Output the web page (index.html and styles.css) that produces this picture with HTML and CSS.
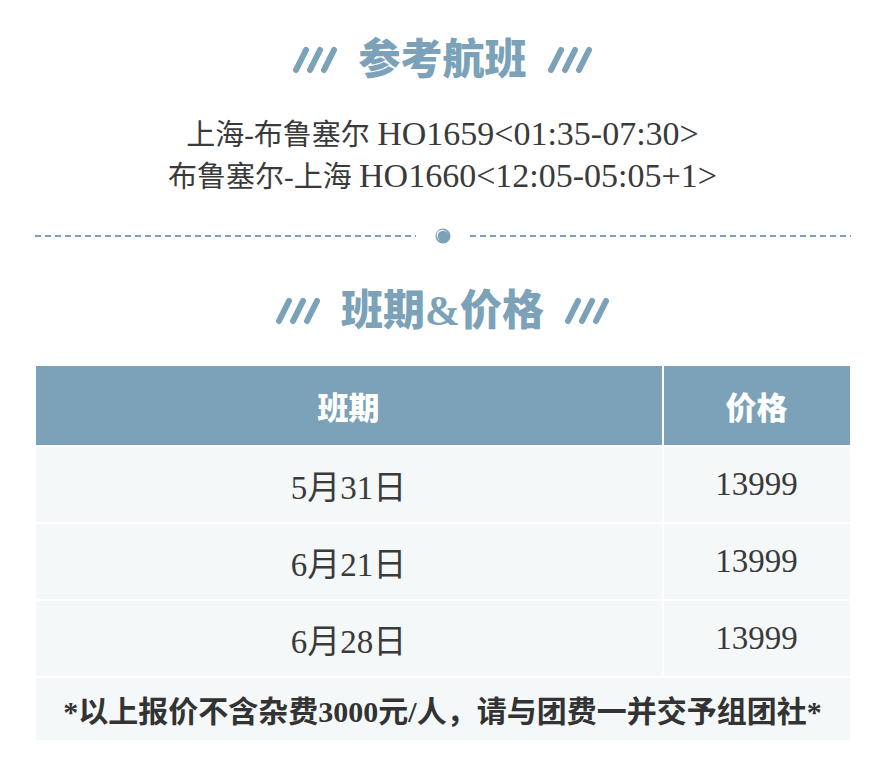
FILE: index.html
```html
<!DOCTYPE html>
<html lang="zh-CN">
<head>
<meta charset="utf-8">
<title>参考航班</title>
<link rel="stylesheet" href="styles.css">
</head>
<body>
<div class="page">
  <div class="title title-first">
    <svg class="slashes" width="46" height="28" viewBox="0 0 46 28"><g stroke="#7ba2b8" stroke-width="6" stroke-linecap="round"><line x1="14" y1="4" x2="4" y2="24"/><line x1="28" y1="4" x2="18" y2="24"/><line x1="42" y1="4" x2="32" y2="24"/></g></svg>
    <span class="title-text">参考航班</span>
    <svg class="slashes" width="46" height="28" viewBox="0 0 46 28"><g stroke="#7ba2b8" stroke-width="6" stroke-linecap="round"><line x1="14" y1="4" x2="4" y2="24"/><line x1="28" y1="4" x2="18" y2="24"/><line x1="42" y1="4" x2="32" y2="24"/></g></svg>
  </div>
  <div class="routes">
    <div class="route">上海-布鲁塞尔 <span class="latin">HO1659&lt;01:35-07:30&gt;</span></div>
    <div class="route">布鲁塞尔-上海 <span class="latin">HO1660&lt;12:05-05:05+1&gt;</span></div>
  </div>
  <div class="divider">
    <span class="dash"></span>
    <svg class="dot" width="16" height="16" viewBox="0 0 16 16"><circle cx="8" cy="8" r="7.5" fill="#7ba2b8"/><circle cx="7.3" cy="7.3" r="5.6" fill="#ffffff"/><circle cx="8.2" cy="8.2" r="5.5" fill="#7ba2b8"/></svg>
    <span class="dash"></span>
  </div>
  <div class="title title-second">
    <svg class="slashes" width="46" height="28" viewBox="0 0 46 28"><g stroke="#7ba2b8" stroke-width="6" stroke-linecap="round"><line x1="14" y1="4" x2="4" y2="24"/><line x1="28" y1="4" x2="18" y2="24"/><line x1="42" y1="4" x2="32" y2="24"/></g></svg>
    <span class="title-text">班期&amp;价格</span>
    <svg class="slashes" width="46" height="28" viewBox="0 0 46 28"><g stroke="#7ba2b8" stroke-width="6" stroke-linecap="round"><line x1="14" y1="4" x2="4" y2="24"/><line x1="28" y1="4" x2="18" y2="24"/><line x1="42" y1="4" x2="32" y2="24"/></g></svg>
  </div>
  <div class="table">
    <div class="cell head">班期</div>
    <div class="cell head">价格</div>
    <div class="cell">5月31日</div>
    <div class="cell">13999</div>
    <div class="cell">6月21日</div>
    <div class="cell">13999</div>
    <div class="cell">6月28日</div>
    <div class="cell">13999</div>
    <div class="cell note">*以上报价不含杂费3000元/人，请与团费一并交予组团社*</div>
  </div>
</div>
</body>
</html>
```

FILE: styles.css
```css
* { box-sizing: border-box; }
html, body { margin: 0; padding: 0; background: #ffffff; }
body {
  font-family: "Liberation Serif", "Noto Sans CJK SC", serif;
  color: #333333;
}
.page {
  width: 885px;
  display: flex;
  flex-direction: column;
  align-items: center;
}
.title {
  display: flex;
  align-items: center;
  justify-content: center;
  gap: 20px;
  height: 46px;
}
.title-first { margin-top: 37px; }
.title-second { margin-top: 44px; }
.title-text {
  font-family: "Liberation Serif", "Noto Sans CJK SC", sans-serif;
  font-weight: 900;
  font-size: 42px;
  line-height: 46px;
  color: #7ba2b8;
}
.slashes { display: block; }
.routes {
  margin-top: 31px;
  display: flex;
  flex-direction: column;
  align-items: center;
}
.route {
  height: 42px;
  font-size: 29px;
  line-height: 42px;
  color: #3a3a3a;
}
.latin { font-size: 34px; line-height: 1; }
.divider {
  margin-top: 30px;
  width: 816px;
  height: 16px;
  display: flex;
  align-items: center;
  gap: 19px;
}
.dash {
  flex: 1;
  height: 2px;
  background: repeating-linear-gradient(to right, #7ba2b8 0 6px, transparent 6px 10px);
}
.dot { display: block; }
.table {
  margin-top: 32px;
  width: 814px;
  display: grid;
  grid-template-columns: 626px 186px;
  grid-template-rows: 79px 75px 75px 75px 62px;
  gap: 2px;
}
.cell {
  background: #f4f8f9;
  display: flex;
  align-items: center;
  justify-content: center;
  font-size: 33px;
  color: #3a3a3a;
}
.head {
  background: #7ba2b8;
  color: #ffffff;
  font-family: "Noto Sans CJK SC", sans-serif;
  font-weight: 900;
  font-size: 31px;
}
.note {
  grid-column: 1 / span 2;
  font-weight: 700;
  font-size: 30px;
  color: #333333;
}
```
